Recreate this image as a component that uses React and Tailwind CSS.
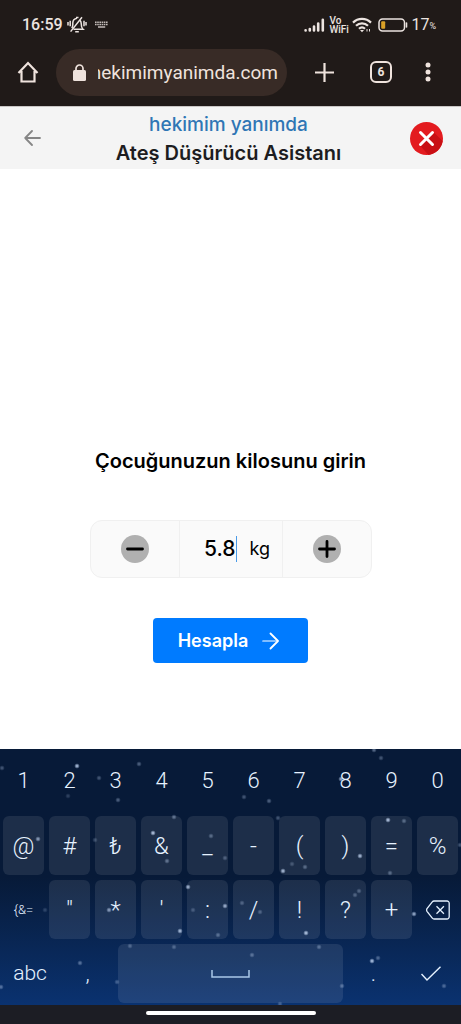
import React, { useState } from 'react';

// Stars of the keyboard theme: x, y, opacity
const stars = [
    [77, 17, 0.8], [2, 19, 0.3], [99, 29, 0.3], [139, 15, 0.35], [68, 47, 0.2], [118, 51, 0.35],
    [38, 90, 0.6], [95, 91, 0.25], [174, 68, 0.4], [153, 84, 0.8], [167, 112, 0.4], [211, 87, 0.35],
    [225, 109, 0.3], [244, 48, 0.3], [269, 52, 0.35], [278, 69, 0.3], [341, 30, 0.7], [381, 9, 0.3],
    [374, 1, 0.4], [388, 71, 0.8], [404, 72, 0.35], [360, 107, 0.75], [283, 122, 0.75], [292, 115, 0.25],
    [305, 118, 0.35], [390, 124, 0.35], [460, 96, 0.3], [109, 161, 0.6], [45, 161, 0.2], [188, 138, 0.7],
    [225, 157, 0.7], [193, 161, 0.25], [180, 182, 0.75], [218, 186, 0.35], [242, 154, 0.3], [260, 163, 0.3],
    [306, 184, 0.8], [355, 146, 0.3], [359, 142, 0.3], [414, 165, 0.7], [130, 197, 0.3], [174, 198, 0.3],
    [80, 214, 0.4], [117, 233, 0.3], [1, 238, 0.4], [252, 206, 0.35], [319, 198, 0.35], [342, 237, 0.35],
    [372, 212, 0.8], [378, 209, 0.35], [444, 237, 0.35], [280, 255, 0.3],
];

const digits = ['1', '2', '3', '4', '5', '6', '7', '8', '9', '0'];
const symbolsTop = ['@', '#', '₺', '&', '_', '-', '(', ')', '=', '%'];
const symbolsBottom = ['"', '*', "'", ':', '/', '!', '?', '+'];

const StatusBar = () => (
    <div className="flex h-12 items-center justify-between pl-[22px] pr-[25px] pt-0.5 text-[#ece4e0]">
        <div className="flex items-center">
            <span className="text-base font-medium">16:59</span>
            <svg className="ml-1 h-[18px] w-5" viewBox="0 0 20 18" fill="none" stroke="currentColor" strokeWidth="1.5">
                <path d="M4.800 12.200c.800-1 1-2 1-3.600V7c0-2.600 1.700-4.400 4.200-4.800M13 4.200c.800.900 1.200 2 1.200 3.300 0 3.200.300 4.400 1.800 5.700H6.500" />
                <path d="M3.600 15.600 15 1.200M1 6v3.500M3.200 4.800v5.500M17 4.800v5.500M19 6v3.500M8.200 15.800h3.600" />
                <path d="M9 1.500h2.500" />
            </svg>
            <svg className="ml-2 h-2 w-[13px]" viewBox="0 0 13 8" fill="none" stroke="currentColor" strokeWidth="1.5" opacity="0.8">
                <path d="M0 1.2h13M0 3.6h13" strokeDasharray="1.6 .6" />
                <path d="M3 6h7.2" />
            </svg>
        </div>
        <div className="flex items-center">
            <svg className="h-[14px] w-[21px]" viewBox="0 0 21 14" stroke="currentColor" strokeWidth="2.6" strokeLinecap="round">
                <path d="M1.6 12.4v-.1M5.8 12.4v-1.4M10 12.4V8.6M14.2 12.4V5.6M18.8 12.4V1.8" />
            </svg>
            <span className="ml-1 w-5 text-[10px] font-medium leading-[9px]">Vo WiFi</span>
            <svg className="ml-[3px] h-4 w-5" viewBox="0 0 20 16" fill="none" stroke="currentColor" strokeWidth="2.2">
                <path d="M1 5.6C6 .6 14 .6 19 5.6M4 8.8c3.400-3.300 8.600-3.300 12 0M7 11.800c1.800-1.700 4.200-1.700 6 0" />
                <path d="m8 13 2 2.300 2-2.300z" fill="currentColor" stroke="none" />
                <path d="M15 12v2.500M17.500 12v2.500" strokeWidth="1" />
            </svg>
            <svg className="ml-1.5 h-[14px] w-[30px]" viewBox="0 0 30 14" fill="none">
                <rect x="1" y="1" width="25.500" height="12" rx="3.500" stroke="currentColor" strokeWidth="1.500" />
                <rect x="3.200" y="3.200" width="4" height="7.600" rx="1" fill="#d9a026" />
                <path d="M28.500 5v4" stroke="currentColor" strokeWidth="1.600" strokeLinecap="round" />
            </svg>
            <span className="ml-[3px] text-base">17</span>
            <span className="mt-1 text-[9px]">%</span>
        </div>
    </div>
);

const BrowserBar = () => (
    <div className="flex h-[58px] items-center pb-[10px] pl-[17px] pr-[26px] text-[#efe3dd]">
        <button type="button" aria-label="Ana sayfa">
            <svg className="size-[22px]" viewBox="0 0 22 22" fill="none" stroke="currentColor" strokeWidth="2.200">
                <path d="M1.500 12 11 2l9.500 10M4.500 10v10.500h13V10" />
            </svg>
        </button>
        <div className="ml-[17px] flex h-[47px] min-w-0 flex-1 items-center rounded-full bg-[#382b26] pl-[17px] pr-[9px]">
            <svg className="h-[17px] w-[13px] shrink-0" viewBox="0 0 13 17" fill="none">
                <rect y="6" width="13" height="11" rx="1.500" fill="currentColor" />
                <path d="M3 7V4.500a3.500 3.500 0 0 1 7 0V7" stroke="currentColor" strokeWidth="1.700" />
            </svg>
            <input
                type="text"
                dir="rtl"
                aria-label="Adres"
                defaultValue="hekimimyanimda.com"
                className="ml-3 w-full min-w-0 bg-transparent pt-0.5 text-[19px] outline-none"
            />
        </div>
        <button type="button" aria-label="Yeni sekme" className="ml-7">
            <svg className="size-[19px]" viewBox="0 0 19 19" stroke="currentColor" strokeWidth="2.200">
                <path d="M9.500 0v19M0 9.500h19" />
            </svg>
        </button>
        <button type="button" aria-label="Sekmeler" className="ml-9 size-[22px] rounded-md border-2 border-[#efe3dd] text-xs font-bold leading-[18px]">
            6
        </button>
        <button type="button" aria-label="Menü" className="ml-[29px]">
            <svg className="h-5 w-[14px]" viewBox="0 0 14 20" fill="currentColor">
                <circle cx="7" cy="3" r="2.500" />
                <circle cx="7" cy="10" r="2.500" />
                <circle cx="7" cy="17" r="2.500" />
            </svg>
        </button>
    </div>
);

const AppHeader = () => (
    <header className="flex h-[63px] items-center justify-between border-t border-[#c9c6c5] bg-[#f4f4f4] px-[18px]">
        <button type="button" aria-label="Geri" className="w-[33px] pl-1.5 text-[#868686]">
            <svg className="h-4 w-[17px]" viewBox="0 0 17 16" fill="none" stroke="currentColor" strokeWidth="1.800" strokeLinecap="round" strokeLinejoin="round">
                <path d="M16 8H1.200M8 1 1.200 8 8 15" />
            </svg>
        </button>
        <div className="pr-1 pt-0.5 text-center">
            <p className="text-[19px] font-medium leading-7 text-[#2f76b5]">hekimim yanımda</p>
            <h1 className="text-xl font-semibold leading-7 text-[#1d1d1f]">Ateş Düşürücü Asistanı</h1>
        </div>
        <button type="button" aria-label="Kapat">
            <svg className="size-[33px]" viewBox="0 0 33 33" fill="none">
                <circle cx="16.500" cy="16.500" r="16.500" fill="#e31b1f" />
                <path d="M23.200 9.800 32.600 19A16.500 16.500 0 0 1 18.500 32.900L9.800 23.200l6.700-6.700z" fill="#c90f14" />
                <path d="m10.500 10.500 12 12M22.500 10.500l-12 12" stroke="#fff" strokeWidth="3" strokeLinecap="round" />
            </svg>
        </button>
    </header>
);

const StepButton = ({ label, path, onClick }) => (
    <button type="button" aria-label={label} onClick={onClick} className="flex flex-1 items-center justify-center">
        <svg className="size-7" viewBox="0 0 28 28" stroke="#000" strokeWidth="2.800" strokeLinecap="round">
            <circle cx="14" cy="14" r="14" fill="#b0b0b0" stroke="none" />
            <path d={path} />
        </svg>
    </button>
);

const WeightForm = () => {
    const [weight, setWeight] = useState('5.8');
    const changeWeight = (amount) => {
        const next = Math.max(0, (parseFloat(weight) || 0) + amount);
        setWeight(next.toFixed(1));
    };
    return (
        <form onSubmit={(e) => e.preventDefault()} className="flex flex-col items-center">
            <label htmlFor="weight" className="text-xl font-semibold leading-7 text-black">
                Çocuğunuzun kilosunu girin
            </label>
            <div className="mt-[45px] flex h-[58px] w-[282px] rounded-xl border border-[#f0f0f0] bg-[#fafafa]">
                <StepButton label="Azalt" path="M6.500 14h15" onClick={() => changeWeight(-0.1)} />
                <div className="flex w-[104px] items-center border-x border-[#f0f0f0]">
                    <input
                        id="weight"
                        type="text"
                        inputMode="decimal"
                        value={weight}
                        onChange={(e) => setWeight(e.target.value)}
                        className="w-14 bg-transparent text-right text-[21px] font-medium text-black outline-none"
                    />
                    <span className="h-[26px] w-px bg-[#4a9be8]"></span>
                    <span className="ml-[13px] text-lg text-black">kg</span>
                </div>
                <StepButton label="Artır" path="M6.500 14h15M14 6.500v15" onClick={() => changeWeight(0.1)} />
            </div>
            <button type="submit" className="mt-10 flex h-[45px] w-[155px] items-center justify-center gap-[14px] rounded-sm bg-[#007bff] pr-1 text-lg font-semibold text-white">
                Hesapla
                <svg className="h-[18px] w-[17px]" viewBox="0 0 17 18" fill="none" stroke="currentColor" strokeLinecap="round" strokeLinejoin="round">
                    <path d="M.800 9H15" strokeWidth="1.200" />
                    <path d="m8.500 1.500 7.500 7.500-7.500 7.500" strokeWidth="1.800" />
                </svg>
            </button>
        </form>
    );
};

const Key = ({ children }) => (
    <button type="button" className="flex h-[59px] items-center justify-center rounded-md bg-white/9 text-2xl font-light">
        {children}
    </button>
);

const Keyboard = () => (
    <div className="relative bg-linear-to-b from-[#071a38] from-50% to-[#0a3270] text-[22px] font-light text-[#e6f2ff]">
        <svg className="absolute inset-0 h-full w-full" viewBox="0 0 461 256" preserveAspectRatio="none">
            <defs>
                <radialGradient id="star">
                    <stop offset="0.3" stopColor="#b9cdec" />
                    <stop offset="1" stopColor="#b9cdec" stopOpacity="0" />
                </radialGradient>
            </defs>
            {stars.map(([x, y, opacity], index) => (
                <circle key={index} cx={x} cy={y} r="2.800" fill="url(#star)" opacity={opacity} />
            ))}
        </svg>
        <div className="relative flex flex-col gap-[5px] px-[3px] pb-[2px]">
            <div className="grid h-[62px] grid-cols-10 gap-[5px]">
                {digits.map((digit) => (
                    <button key={digit} type="button">{digit}</button>
                ))}
            </div>
            <div className="grid grid-cols-10 gap-[5px]">
                {symbolsTop.map((symbol) => (
                    <Key key={symbol}>{symbol}</Key>
                ))}
            </div>
            <div className="grid grid-cols-10 gap-[5px]">
                <button type="button" className="text-[13px]">{'{&='}</button>
                {symbolsBottom.map((symbol) => (
                    <Key key={symbol}>{symbol}</Key>
                ))}
                <button type="button" aria-label="Sil" className="flex items-center justify-center">
                    <svg className="h-5 w-6" viewBox="0 0 24 20" fill="none" stroke="currentColor" strokeWidth="1.300" strokeLinejoin="round">
                        <path d="M8 1h13a2.200 2.200 0 0 1 2.200 2.200v13.600A2.200 2.200 0 0 1 21 19H8q-1 0-1.700-.900L1 11.300q-.800-1.300 0-2.600L6.300 1.900Q7 1 8 1z" />
                        <path d="m10.500 6.300 7.400 7.400M17.900 6.300l-7.400 7.400" />
                    </svg>
                </button>
            </div>
            <div className="grid h-[59px] grid-cols-[54fr_51fr_225fr_51fr_54fr] gap-[5px]">
                <button type="button" className="text-[21px]">abc</button>
                <button type="button">,</button>
                <button type="button" aria-label="Boşluk" className="flex items-center justify-center rounded-md bg-white/9">
                    <svg className="h-2 w-[39px]" viewBox="0 0 39 8" fill="none" stroke="#a9c8e8" strokeWidth="1.500">
                        <path d="M1 0v7h37V0" />
                    </svg>
                </button>
                <button type="button">.</button>
                <button type="button" aria-label="Tamam" className="flex items-center justify-center">
                    <svg className="h-[15px] w-5" viewBox="0 0 20 15" fill="none" stroke="currentColor" strokeWidth="1.400">
                        <path d="m.500 8 5.500 6L19.500.800" />
                    </svg>
                </button>
            </div>
        </div>
    </div>
);

function App() {
    return (
        <div className="flex min-h-screen flex-col bg-white font-['Roboto',sans-serif]">
            <div className="bg-[#201a18]">
                <StatusBar />
                <BrowserBar />
            </div>
            <div className="flex flex-1 flex-col font-['Inter',sans-serif]">
                <AppHeader />
                <main className="flex flex-1 flex-col items-center justify-end pb-[86px]">
                    <WeightForm />
                </main>
            </div>
            <Keyboard />
            <div className="flex h-[19px] justify-center bg-[#1c1d24] pt-[6px]">
                <div className="h-1 w-[170px] rounded-full bg-white"></div>
            </div>
        </div>
    );
}

export default App;
